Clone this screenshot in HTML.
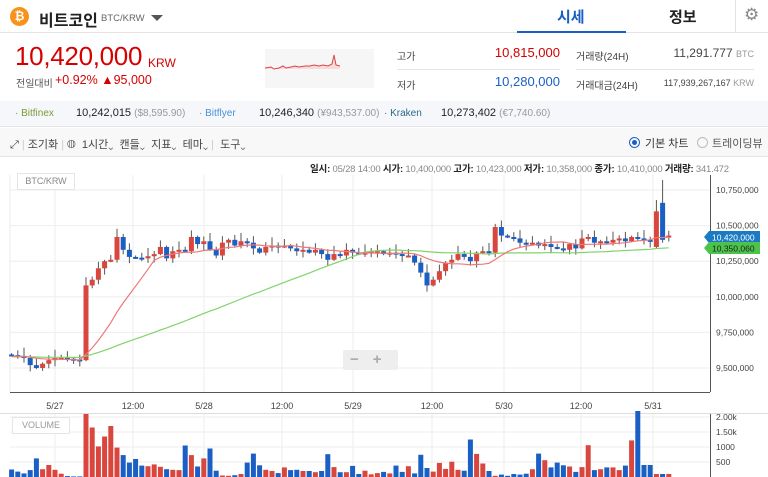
<!DOCTYPE html>
<html><head><meta charset="utf-8">
<style>
*{margin:0;padding:0;box-sizing:border-box}
body{width:768px;height:477px;overflow:hidden;background:#fff;font-family:"Liberation Sans","Noto Sans CJK KR",sans-serif;position:relative;color:#333}
.a{position:absolute;white-space:nowrap}
</style></head><body>
<div class="a" style="left:0;top:0;width:768px;height:33px;border-bottom:1px solid #e3e3e3"></div>
<div class="a" style="left:10px;top:7px;width:19px;height:19px;border-radius:50%;background:#f7931a;color:#fff;font-size:12px;font-weight:bold;text-align:center;line-height:19px">₿</div>
<div class="a" style="left:39px;top:7px;font-size:16px;font-weight:bold;color:#222">비트코인</div>
<div class="a" style="left:101px;top:13px;font-size:9.5px;color:#666">BTC/KRW</div>
<div class="a" style="left:151px;top:15px;width:0;height:0;border-left:6px solid transparent;border-right:6px solid transparent;border-top:6px solid #555"></div>
<div class="a" style="left:557px;top:6px;font-size:15px;font-weight:bold;color:#1a5fc4">시세</div>
<div class="a" style="left:517px;top:31px;width:109px;height:2px;background:#1a5fc4"></div>
<div class="a" style="left:669px;top:6px;font-size:15px;font-weight:bold;color:#222">정보</div>
<div class="a" style="left:735px;top:0;width:1px;height:33px;background:#e3e3e3"></div>
<div class="a" style="left:744px;top:5px;font-size:17px;color:#888">⚙</div>
<div class="a" style="left:15px;top:41px;font-size:26px;color:#d60000;letter-spacing:-0.3px">10,420,000</div>
<div class="a" style="left:148px;top:56px;font-size:12px;color:#d60000">KRW</div>
<div class="a" style="left:16px;top:75px;font-size:10px;color:#555">전일대비</div>
<div class="a" style="left:55px;top:73px;font-size:12.5px;color:#d60000">+0.92% ▲95,000</div>
<div class="a" style="left:265px;top:49px;width:109px;height:39px;background:#f6f6f6"></div>
<svg class="a" style="left:265px;top:49px" width="109" height="39"><path d="M0 19 L6 18 L9 20 L14 19 L18 17 L21 19 L26 18 L30 17 L34 18 L40 17 L45 17 L49 16 L54 17 L58 16 L63 17 L67 15 L69 6 L71 16 L75 17 L75 20 L0 20Z" fill="#f5dcdc"/><path d="M0 19 L6 18 L9 20 L14 19 L18 17 L21 19 L26 18 L30 17 L34 18 L40 17 L45 17 L49 16 L54 17 L58 16 L63 17 L67 15 L69 6 L71 16 L75 17" fill="none" stroke="#d44" stroke-width="1"/></svg>
<div class="a" style="left:397px;top:48px;font-size:10px;color:#444">고가</div>
<div class="a" style="left:440px;top:45px;width:120px;text-align:right;font-size:13px;color:#d60000">10,815,000</div>
<div class="a" style="left:397px;top:69px;width:163px;height:1px;background:#e5e5e5"></div>
<div class="a" style="left:397px;top:77px;font-size:10px;color:#444">저가</div>
<div class="a" style="left:440px;top:74px;width:120px;text-align:right;font-size:13px;color:#1a5fc4">10,280,000</div>
<div class="a" style="left:576px;top:48px;font-size:10px;color:#444">거래량(24H)</div>
<div class="a" style="left:640px;top:46px;width:114px;text-align:right;font-size:12px;color:#444">11,291.777 <span style="font-size:9px;color:#999">BTC</span></div>
<div class="a" style="left:576px;top:69px;width:178px;height:1px;background:#e5e5e5"></div>
<div class="a" style="left:576px;top:77px;font-size:10px;color:#444">거래대금(24H)</div>
<div class="a" style="left:640px;top:78px;width:114px;text-align:right;font-size:9px;color:#444">117,939,267,167 <span style="color:#999">KRW</span></div>
<div class="a" style="left:0;top:101px;width:768px;height:26px;background:#f5f7fa;border-bottom:1px solid #e3e3e3"></div>
<div class="a" style="left:15px;top:108px;font-size:10px;color:#7a9a3a">· Bitfinex</div>
<div class="a" style="left:76px;top:107px;font-size:11px;color:#222">10,242,015 <span style="font-size:10px;color:#999">($8,595.90)</span></div>
<div class="a" style="left:199px;top:108px;font-size:10px;color:#4a90d9">· Bitflyer</div>
<div class="a" style="left:259px;top:107px;font-size:11px;color:#222">10,246,340 <span style="font-size:10px;color:#999">(¥943,537.00)</span></div>
<div class="a" style="left:384px;top:108px;font-size:10px;color:#2a6a8a">· Kraken</div>
<div class="a" style="left:441px;top:107px;font-size:11px;color:#222">10,273,402 <span style="font-size:10px;color:#999">(€7,740.60)</span></div>
<div class="a" style="left:0;top:128px;width:768px;height:29px;background:#f8f8f8;border-bottom:1px solid #e5e5e5"></div>
<div class="a" style="left:10px;top:136px;font-size:11px;color:#444">⤢ <span style="color:#ccc">|</span> 조기화 <span style="color:#ccc">|</span> ◍ &nbsp;1시간⌄ &nbsp;캔들⌄ &nbsp;지표⌄ &nbsp;테마⌄ <span style="color:#ccc">|</span> &nbsp;도구⌄</div>
<div class="a" style="left:629px;top:137px;width:11px;height:11px;border-radius:50%;border:1px solid #1a5fc4"></div>
<div class="a" style="left:632px;top:140px;width:5px;height:5px;border-radius:50%;background:#1a5fc4"></div>
<div class="a" style="left:645px;top:135px;font-size:11px;color:#333">기본 차트</div>
<div class="a" style="left:697px;top:137px;width:11px;height:11px;border-radius:50%;border:1px solid #bbb"></div>
<div class="a" style="left:712px;top:135px;font-size:11px;color:#555">트레이딩뷰</div>
<div class="a" style="left:310px;top:161px;font-size:9.5px;color:#888;letter-spacing:-0.2px"><b style="color:#222">일시:</b> 05/28 14:00 <b style="color:#222">시가:</b> 10,400,000 <b style="color:#222">고가:</b> 10,423,000 <b style="color:#222">저가:</b> 10,358,000 <b style="color:#222">종가:</b> 10,410,000 <b style="color:#222">거래량:</b> 341.472</div>
<svg id="c" class="a" style="left:0;top:0" width="768" height="477"></svg>
<div class="a" style="left:17px;top:173px;width:58px;height:17px;border:1px solid #e5e5e5;background:#fff;font-size:9px;color:#888;text-align:center;line-height:15px">BTC/KRW</div>
<div class="a" style="left:12px;top:417px;width:58px;height:17px;border:1px solid #e5e5e5;background:#fff;font-size:9px;color:#999;text-align:center;line-height:15px">VOLUME</div>
<div class="a" style="left:343px;top:350px;width:55px;height:20px;background:#eee;border-radius:2px;color:#aaa;font-size:15px;line-height:19px;font-weight:bold"><span style="margin-left:7px">−</span><span style="margin-left:14px">+</span></div>
<script>
var s=document.getElementById('c'),h='';
function Y(p){return 190+(10750-p)/250*35.6}
[10750,10500,10250,10000,9750,9500].forEach(function(p){var y=Y(p);h+='<line x1="10" x2="710" y1="'+y+'" y2="'+y+'" stroke="#eee"/>';h+='<text x="716" y="'+(y+3)+'" font-size="8.5" fill="#444" font-family="Liberation Sans">'+p.toLocaleString('en')+',000</text>'});
var vx=[55,133,204,282,353,432,504,581,653],vl=['5/27','12:00','5/28','12:00','5/29','12:00','5/30','12:00','5/31'];
vx.forEach(function(x,i){h+='<line x1="'+x+'" x2="'+x+'" y1="175" y2="392" stroke="#eee"/><line x1="'+x+'" x2="'+x+'" y1="414" y2="477" stroke="#eee"/><text x="'+x+'" y="409" font-size="9" fill="#444" text-anchor="middle" font-family="Liberation Sans">'+vl[i]+'</text>'});
h+='<line x1="10" x2="10" y1="175" y2="392" stroke="#eee"/><line x1="10" x2="710" y1="392.5" y2="392.5" stroke="#555"/><line x1="710.5" x2="710.5" y1="175" y2="392" stroke="#555"/><line x1="0" x2="768" y1="413.5" y2="413.5" stroke="#ddd"/><line x1="710.5" x2="710.5" y1="414" y2="477" stroke="#555"/>';
var VS=0.03;
[[2000,'2.00k'],[1500,'1.50k'],[1000,'1000'],[500,'500']].forEach(function(a){var y=477-a[0]*VS;h+='<line x1="10" x2="710" y1="'+y+'" y2="'+y+'" stroke="#eee"/><text x="716" y="'+(y+3)+'" font-size="8.5" fill="#444" font-family="Liberation Sans">'+a[1]+'</text>'});
var C=[9590,9585,9570,9520,9500,9530,9555,9570,9572,9565,9560,9555,10080,10120,10200,10250,10260,10420,10330,10280,10275,10270,10285,10300,10350,10270,10320,10330,10320,10420,10370,10390,10330,10290,10380,10400,10360,10390,10380,10340,10310,10350,10360,10350,10360,10340,10320,10330,10310,10330,10300,10260,10300,10290,10330,10310,10300,10310,10320,10320,10300,10310,10300,10290,10290,10240,10170,10080,10120,10180,10240,10260,10300,10280,10250,10310,10320,10310,10490,10430,10420,10410,10380,10370,10380,10360,10370,10350,10340,10330,10370,10340,10410,10420,10380,10390,10380,10400,10410,10390,10420,10410,10400,10390,10600,10420,10430];
var V=[250,180,120,230,620,260,400,240,110,30,20,20,2100,1650,1020,1350,1700,980,730,480,600,380,360,420,340,260,240,230,1050,730,350,620,950,210,50,40,60,100,480,780,390,240,200,130,320,230,240,200,200,160,200,760,330,160,160,370,100,210,90,130,170,120,380,170,360,120,740,300,180,470,270,510,240,210,1250,770,450,200,40,80,40,100,80,110,260,780,560,320,480,390,350,170,330,1060,230,260,320,320,230,380,1220,2200,400,400];
var pad=[];for(var k=0;k<50;k++)pad.push(9580);var A=pad.concat(C);
function ma(n){var p='';for(var i=0;i<C.length;i++){var t=0;for(var j=0;j<n;j++)t+=A[i+50-j];p+=(i?'L':'M')+(55+(i-7)*6.2).toFixed(1)+' '+Y(t/n).toFixed(1)}return p}
for(var i=0;i<C.length;i++){var x=55+(i-7)*6.2,o=i?C[i-1]:9595,c=C[i],col=c>=o?'#d9463e':'#1a5fc4';if(i==105){o=10660;c=10400;col='#1a5fc4'}if(i==104){o=10350}
var hi=Math.max(o,c)+((i*37)%5)*12+10,lo=Math.min(o,c)-((i*53)%4)*12-8;if(i==105)hi=10820;if(i==104)hi=10680;
var y1=Y(Math.max(o,c)),y2=Y(Math.min(o,c));if(y2-y1<2)y2=y1+2;
h+='<line x1="'+x+'" x2="'+x+'" y1="'+Y(hi)+'" y2="'+Y(lo)+'" stroke="#555"/><rect x="'+(x-2.5)+'" y="'+y1+'" width="5" height="'+(y2-y1)+'" fill="'+col+'"/>';
var v=V[i]||100;h+='<rect x="'+(x-2.5)+'" y="'+(477-v*VS)+'" width="5" height="'+(v*VS)+'" fill="'+col+'"/>';}
h+='<path d="'+ma(46)+'" fill="none" stroke="#7fd46a" stroke-width="1.2"/><path d="'+ma(12)+'" fill="none" stroke="#e77" stroke-width="1.2"/>';
h+='<path d="M704 237 L709 231 L760 231 L760 243 L709 243Z" fill="#1a7bc4"/><text x="712" y="240.5" font-size="8.5" fill="#fff" font-family="Liberation Sans">10,420,000</text>';
h+='<path d="M704 248 L709 242 L760 242 L760 254 L709 254Z" fill="#4cc44c"/><text x="712" y="251.5" font-size="8.5" fill="#222" font-family="Liberation Sans">10,350,060</text>';
s.innerHTML=h;
</script>
</body></html>
